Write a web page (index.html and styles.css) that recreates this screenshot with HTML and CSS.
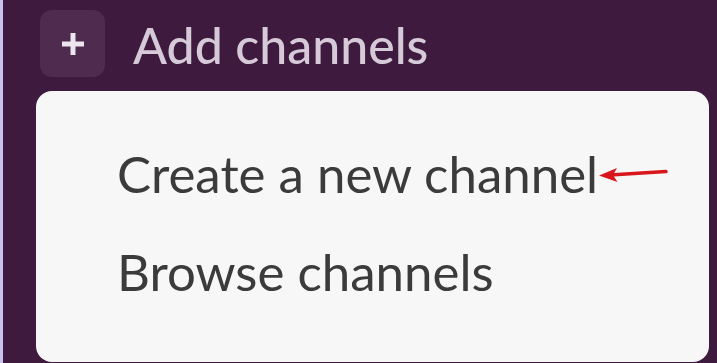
FILE: index.html
```html
<!DOCTYPE html>
<html>
<head>
<meta charset="utf-8">
<link rel="stylesheet" href="styles.css">
</head>
<body>
<div class="sidebar">
  <div class="add-row">
    <div class="plus-box">
      <svg class="plus-icon" width="30" height="30" viewBox="0 0 30 30"><path d="M15 4v22M4 15h22" stroke="#ece4ee" stroke-width="5" stroke-linecap="butt"/></svg>
    </div>
    <span class="add-label">Add channels</span>
  </div>
  <div class="menu">
    <div class="menu-item first">
      <span>Create a new channel</span>
      <svg class="arrow" width="72" height="20" viewBox="0 0 72 20"><path d="M68 6.5 L12 10" stroke="#d8161b" stroke-width="3.5" stroke-linecap="round"/><path d="M1 10.5 L19 3 L15 10 L19.5 17 Z" fill="#d8161b"/></svg>
    </div>
    <div class="menu-item">
      <span>Browse channels</span>
    </div>
  </div>
</div>
</body>
</html>
```
FILE: styles.css
```css
html, body {
  margin: 0;
  padding: 0;
}
body {
  width: 717px;
  height: 363px;
  overflow: hidden;
  background: #3e1a3f;
  font-family: Lato, "Noto Sans", sans-serif;
}
.sidebar {
  height: 363px;
  border-left: 3px solid #c9c2ec;
  box-sizing: border-box;
  display: flex;
  flex-direction: column;
}
.add-row {
  display: flex;
  align-items: center;
  height: 88px;
  padding-left: 37px;
  box-sizing: border-box;
}
.plus-box {
  width: 65px;
  height: 67px;
  border-radius: 12px;
  background: #4f2b50;
  display: flex;
  align-items: center;
  justify-content: center;
  margin-top: -1px;
}
.add-label {
  margin-left: 28px;
  color: #d6cad8;
  font-size: 50px;
  font-weight: 500;
  margin-top: 2px;
}
.menu {
  margin-top: 3px;
  margin-left: 33px;
  width: 673px;
  height: 271px;
  background: #f7f7f7;
  border-radius: 16px;
  box-sizing: border-box;
  padding-top: 52px;
  padding-left: 81px;
}
.menu-item {
  display: flex;
  align-items: center;
  color: #3b3b3b;
  font-size: 51px;
  line-height: 62px;
  height: 62px;
}
.menu-item.first {
  margin-bottom: 36px;
}
.arrow {
  margin-left: 0;
  margin-top: 2px;
}
```
